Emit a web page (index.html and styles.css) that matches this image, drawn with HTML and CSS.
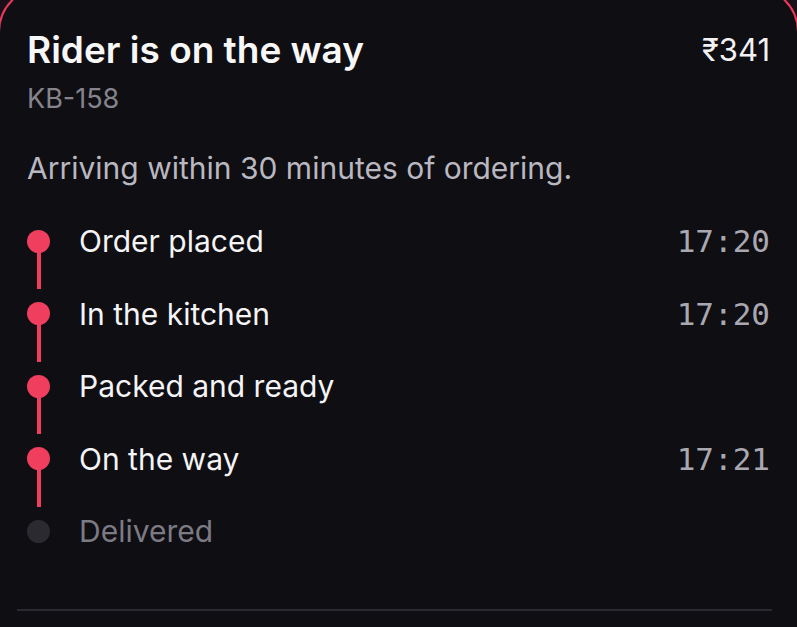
FILE: index.html
```html
<!DOCTYPE html>
<html>
<head>
    <title>Order status</title>
    <link rel="stylesheet" href="styles.css">
</head>
<body>
    <div class="card">
        <div class="card-head">
            <h1 class="title">Rider is on the way</h1>
            <span class="price">₹341</span>
        </div>
        <div class="order-id">KB-158</div>
        <p class="eta">Arriving within 30 minutes of ordering.</p>

        <ul class="steps">
            <li class="step done">
                <span class="dot"></span>
                <span class="label">Order placed</span>
                <span class="time">17:20</span>
                <span class="line"></span>
            </li>
            <li class="step done">
                <span class="dot"></span>
                <span class="label">In the kitchen</span>
                <span class="time">17:20</span>
                <span class="line"></span>
            </li>
            <li class="step done">
                <span class="dot"></span>
                <span class="label">Packed and ready</span>
                <span class="time"></span>
                <span class="line"></span>
            </li>
            <li class="step done">
                <span class="dot"></span>
                <span class="label">On the way</span>
                <span class="time">17:21</span>
                <span class="line"></span>
            </li>
            <li class="step">
                <span class="dot"></span>
                <span class="label">Delivered</span>
                <span class="time"></span>
            </li>
        </ul>

        <div class="divider"></div>
    </div>
</body>
</html>
```

FILE: styles.css
```css
body {
    margin: 0;
    background-color: #1a0f19;
    font-family: Inter, "Noto Sans", sans-serif;
    overflow: hidden;
}
.card {
    margin: -14px -2px 0 -2px;
    border: 2px solid #e8395c;
    border-radius: 46px;
    background-color: #0f0e13;
    padding: 40px 27px 80px 27px;
}
.card-head {
    display: flex;
    justify-content: space-between;
    align-items: flex-start;
}
.title {
    margin: 0;
    font-size: 37px;
    line-height: 44px;
    font-weight: 600;
    color: #f7f7f8;
}
.price {
    font-size: 31px;
    line-height: 44px;
    color: #f2f2f4;
}
.order-id {
    margin-top: 10px;
    font-size: 27px;
    line-height: 34px;
    color: #85848d;
}
.eta {
    margin: 33px 0 0 0;
    font-size: 30px;
    line-height: 38px;
    color: #b9b8c0;
}
.steps {
    list-style: none;
    margin: 38px 0 0 0;
    padding: 0;
}
.step {
    display: grid;
    grid-template-columns: 23px 1fr auto;
    grid-template-rows: 32px 40.5px;
    column-gap: 29px;
    align-items: center;
}
.dot {
    width: 23px;
    height: 23px;
    border-radius: 50%;
    background-color: #2b2a30;
}
.step.done .dot {
    background-color: #f03e5e;
}
.label {
    font-size: 30px;
    color: #f4f4f6;
}
.step:not(.done) .label {
    color: #7c7b84;
}
.time {
    font-family: "DejaVu Sans Mono", monospace;
    font-size: 31px;
    color: #a9a8b1;
}
.line {
    grid-column: 1;
    grid-row: 2;
    align-self: start;
    justify-self: center;
    width: 4px;
    height: 38px;
    margin-top: -6px;
    background-color: #f03e5e;
}
.divider {
    margin: 21px -2px 0 -10px;
    height: 2px;
    background-color: #2a2930;
}
```
